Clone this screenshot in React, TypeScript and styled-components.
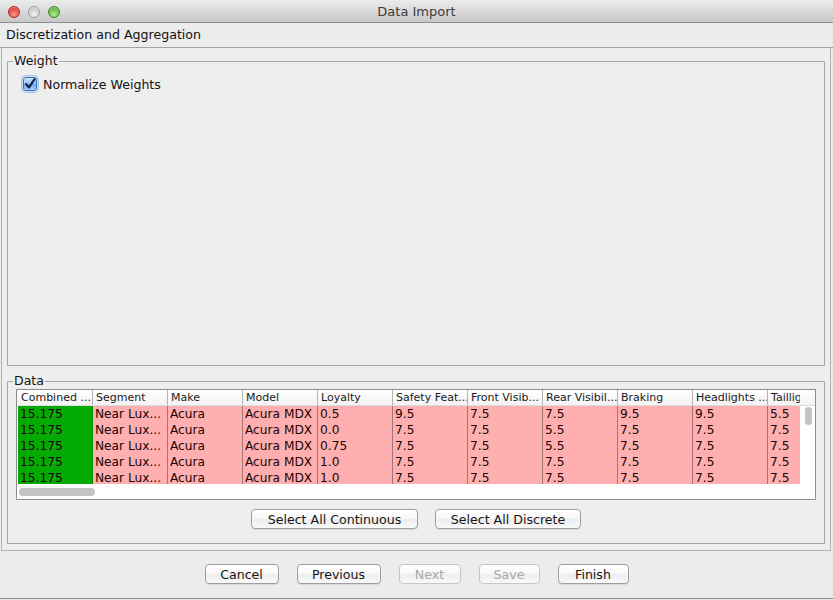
import React from "react";
import styled, { createGlobalStyle } from "styled-components";

const UI_FONT = `"DejaVu Sans", Verdana, sans-serif`;

const GlobalStyle = createGlobalStyle`
  html, body {
    margin: 0;
    padding: 0;
    background: #ececec;
  }
  body {
    font-family: ${UI_FONT};
  }
`;

const Window = styled.div`
  width: 833px;
  height: 599px;
  box-sizing: border-box;
  display: flex;
  flex-direction: column;
  background: #ececec;
  border-bottom: 1px solid #8c8c8c;
  overflow: hidden;
`;

const TitleBar = styled.div`
  height: 23px;
  box-sizing: border-box;
  display: grid;
  grid-template-columns: 1fr auto 1fr;
  align-items: center;
  background: linear-gradient(#ececec, #dadada 50%, #c7c7c7);
  border-bottom: 1px solid #8f8f8f;
`;

const Lights = styled.div`
  display: flex;
  gap: 8px;
  padding-left: 8px;
  padding-top: 1px;
`;

const Light = styled.span<{ $hi: string; $lo: string; $edge: string }>`
  width: 12px;
  height: 12px;
  box-sizing: border-box;
  border-radius: 50%;
  border: 1px solid ${p => p.$edge};
  background: radial-gradient(circle at 50% 75%, ${p => p.$hi}, ${p => p.$lo} 75%);
  box-shadow: inset 0 1px 1px rgba(255, 255, 255, 0.5);
`;

const WindowTitle = styled.div`
  font-size: 13px;
  color: #3c3c3c;
`;

const HeaderStrip = styled.div`
  height: 25px;
  box-sizing: border-box;
  padding-left: 6px;
  line-height: 24px;
  font-size: 12.6px;
  color: #111;
  border-bottom: 1px solid #a3a3a3;
`;

const Body = styled.div`
  flex: 1;
  margin-left: 1px;
  width: 830px;
  box-sizing: border-box;
  border: 1px solid #b2b2b2;
  border-top: none;
  padding: 6px 5px;
  display: flex;
  flex-direction: column;
  gap: 8px;
  background: #eeeeee;
`;

const Group = styled.fieldset<{ $grow?: boolean }>`
  margin: 0;
  padding: 0;
  min-width: 0;
  box-sizing: border-box;
  border: 1px solid #a7a7a7;
  flex: ${p => (p.$grow ? "1 1 auto" : "0 0 auto")};
`;

const GroupTitle = styled.legend`
  margin-left: 5px;
  padding: 0 1px;
  font-size: 12.5px;
  line-height: 14px;
  color: #141414;
`;

const CheckRow = styled.label`
  display: flex;
  align-items: center;
  gap: 4px;
  padding: 7px 0 0 13px;
  font-size: 12.6px;
  color: #141414;
`;

const DataInner = styled.div`
  display: flex;
  flex-direction: column;
  align-items: center;
  padding: 1px 8px 14px 8px;
`;

const TableBox = styled.div`
  width: 800px;
  height: 111px;
  box-sizing: border-box;
  border: 1px solid #8e8e8e;
  background: #fff;
  display: flex;
  flex-direction: column;
  align-self: flex-start;
`;

const HeaderRow = styled.div`
  height: 16px;
  box-sizing: border-box;
  border-bottom: 1px solid #dcdcdc;
  background: linear-gradient(#ffffff, #f3f3f3);
  padding-left: 1px;
  display: flex;
`;

const Clip = styled.div`
  width: 782px;
  overflow: hidden;
  display: flex;
  flex-direction: column;
`;

const Line = styled.div`
  display: flex;
  flex: none;
`;

const HeadCell = styled.div`
  width: 75px;
  flex: none;
  box-sizing: border-box;
  height: 15px;
  line-height: 15px;
  padding-left: 3px;
  font-size: 11px;
  color: #1a1a1a;
  white-space: nowrap;
  overflow: hidden;
  border-right: 1px solid #b4b4b4;
`;

const BodyArea = styled.div`
  height: 78px;
  display: flex;
  padding-left: 1px;
`;

const Cell = styled.div<{ $tone: "good" | "bad" }>`
  width: 75px;
  flex: none;
  box-sizing: border-box;
  height: 16px;
  line-height: 16px;
  padding-left: 2px;
  font-size: 12.2px;
  color: #1c0505;
  white-space: nowrap;
  overflow: hidden;
  background: ${p => (p.$tone === "good" ? "#04aa04" : "#ffafaf")};
  border-right: 1px solid ${p => (p.$tone === "good" ? "#058f05" : "#a07676")};
`;

const VLane = styled.div`
  flex: 1;
  position: relative;
`;

const VThumb = styled.div`
  position: absolute;
  left: 5px;
  top: 1px;
  width: 7px;
  height: 18px;
  border-radius: 4px;
  background: #c3c3c3;
`;

const HLane = styled.div`
  flex: 1;
  position: relative;
`;

const HThumb = styled.div`
  position: absolute;
  left: 2px;
  top: 4px;
  width: 76px;
  height: 8px;
  border-radius: 4px;
  background: #c3c3c3;
`;

const ButtonRow = styled.div<{ $top: number }>`
  display: flex;
  justify-content: center;
  gap: 17px;
  padding-top: ${p => p.$top}px;
`;

const Footer = styled.div`
  height: 47px;
  box-sizing: border-box;
  padding-top: 13px;
  display: flex;
  justify-content: center;
  gap: 18px;
`;

const PushButton = styled.button<{ $w: number }>`
  width: ${p => p.$w}px;
  height: 20px;
  padding: 0;
  box-sizing: border-box;
  border: 1px solid #9f9f9f;
  border-radius: 4px;
  background: linear-gradient(#ffffff, #f7f7f7 50%, #ededed 51%, #f9f9f9);
  box-shadow: 0 1px 0 rgba(0, 0, 0, 0.08);
  font-family: ${UI_FONT};
  font-size: 12.6px;
  color: #161616;
  &:disabled {
    color: #a8a8a8;
    border-color: #c6c6c6;
    box-shadow: none;
  }
`;

const columns = [
  "Combined ...",
  "Segment",
  "Make",
  "Model",
  "Loyalty",
  "Safety Feat...",
  "Front Visib...",
  "Rear Visibil...",
  "Braking",
  "Headlights ...",
  "Taillig",
];

const rows = [
  ["0.5", "9.5", "7.5", "7.5", "9.5", "9.5", "5.5"],
  ["0.0", "7.5", "7.5", "5.5", "7.5", "7.5", "7.5"],
  ["0.75", "7.5", "7.5", "5.5", "7.5", "7.5", "7.5"],
  ["1.0", "7.5", "7.5", "7.5", "7.5", "7.5", "7.5"],
  ["1.0", "7.5", "7.5", "7.5", "7.5", "7.5", "7.5"],
];

function CheckMark() {
  return (
    <svg width="18" height="18" viewBox="0 0 18 18">
      <defs>
        <linearGradient id="cbFill" x1="0" y1="0" x2="0" y2="1">
          <stop offset="0" stopColor="#d4e8fc" />
          <stop offset="0.5" stopColor="#93c0f1" />
          <stop offset="0.52" stopColor="#6ea7eb" />
          <stop offset="1" stopColor="#b2d6f8" />
        </linearGradient>
      </defs>
      <rect x="0.75" y="0.75" width="16.5" height="16.5" rx="4" fill="none" stroke="#86b6ec" strokeOpacity="0.7" strokeWidth="1.5" />
      <rect x="2.5" y="2.5" width="13" height="13" rx="2.5" fill="url(#cbFill)" stroke="#3c6fb4" />
      <path d="M5.2 9.2 L8 12.4 L13.6 4.2" fill="none" stroke="#17264f" strokeWidth="2.3" strokeLinecap="round" strokeLinejoin="round" />
    </svg>
  );
}

export default function App() {
  return (
    <>
      <GlobalStyle />
      <Window>
        <TitleBar>
          <Lights>
            <Light $hi="#ff9a8e" $lo="#d9372c" $edge="#a3281f" />
            <Light $hi="#f4f4f4" $lo="#c4c4c4" $edge="#9d9d9d" />
            <Light $hi="#b8ec92" $lo="#55b130" $edge="#3d8322" />
          </Lights>
          <WindowTitle>Data Import</WindowTitle>
          <div />
        </TitleBar>

        <HeaderStrip>Discretization and Aggregation</HeaderStrip>

        <Body>
          <Group $grow>
            <GroupTitle>Weight</GroupTitle>
            <CheckRow>
              <CheckMark />
              Normalize Weights
            </CheckRow>
          </Group>

          <Group>
            <GroupTitle>Data</GroupTitle>
            <DataInner>
              <TableBox>
                <HeaderRow>
                  <Clip>
                    <Line>
                      {columns.map(c => (
                        <HeadCell key={c}>{c}</HeadCell>
                      ))}
                    </Line>
                  </Clip>
                </HeaderRow>
                <BodyArea>
                  <Clip>
                    {rows.map((r, i) => (
                      <Line key={i}>
                        <Cell $tone="good">15.175</Cell>
                        <Cell $tone="bad">Near Lux...</Cell>
                        <Cell $tone="bad">Acura</Cell>
                        <Cell $tone="bad">Acura MDX</Cell>
                        {r.map((v, j) => (
                          <Cell key={j} $tone="bad">
                            {v}
                          </Cell>
                        ))}
                      </Line>
                    ))}
                  </Clip>
                  <VLane>
                    <VThumb />
                  </VLane>
                </BodyArea>
                <HLane>
                  <HThumb />
                </HLane>
              </TableBox>
              <ButtonRow $top={9}>
                <PushButton $w={167}>Select All Continuous</PushButton>
                <PushButton $w={146}>Select All Discrete</PushButton>
              </ButtonRow>
            </DataInner>
          </Group>
        </Body>

        <Footer>
          <PushButton $w={74}>Cancel</PushButton>
          <PushButton $w={84}>Previous</PushButton>
          <PushButton $w={62} disabled>
            Next
          </PushButton>
          <PushButton $w={61} disabled>
            Save
          </PushButton>
          <PushButton $w={71}>Finish</PushButton>
        </Footer>
      </Window>
    </>
  );
}
